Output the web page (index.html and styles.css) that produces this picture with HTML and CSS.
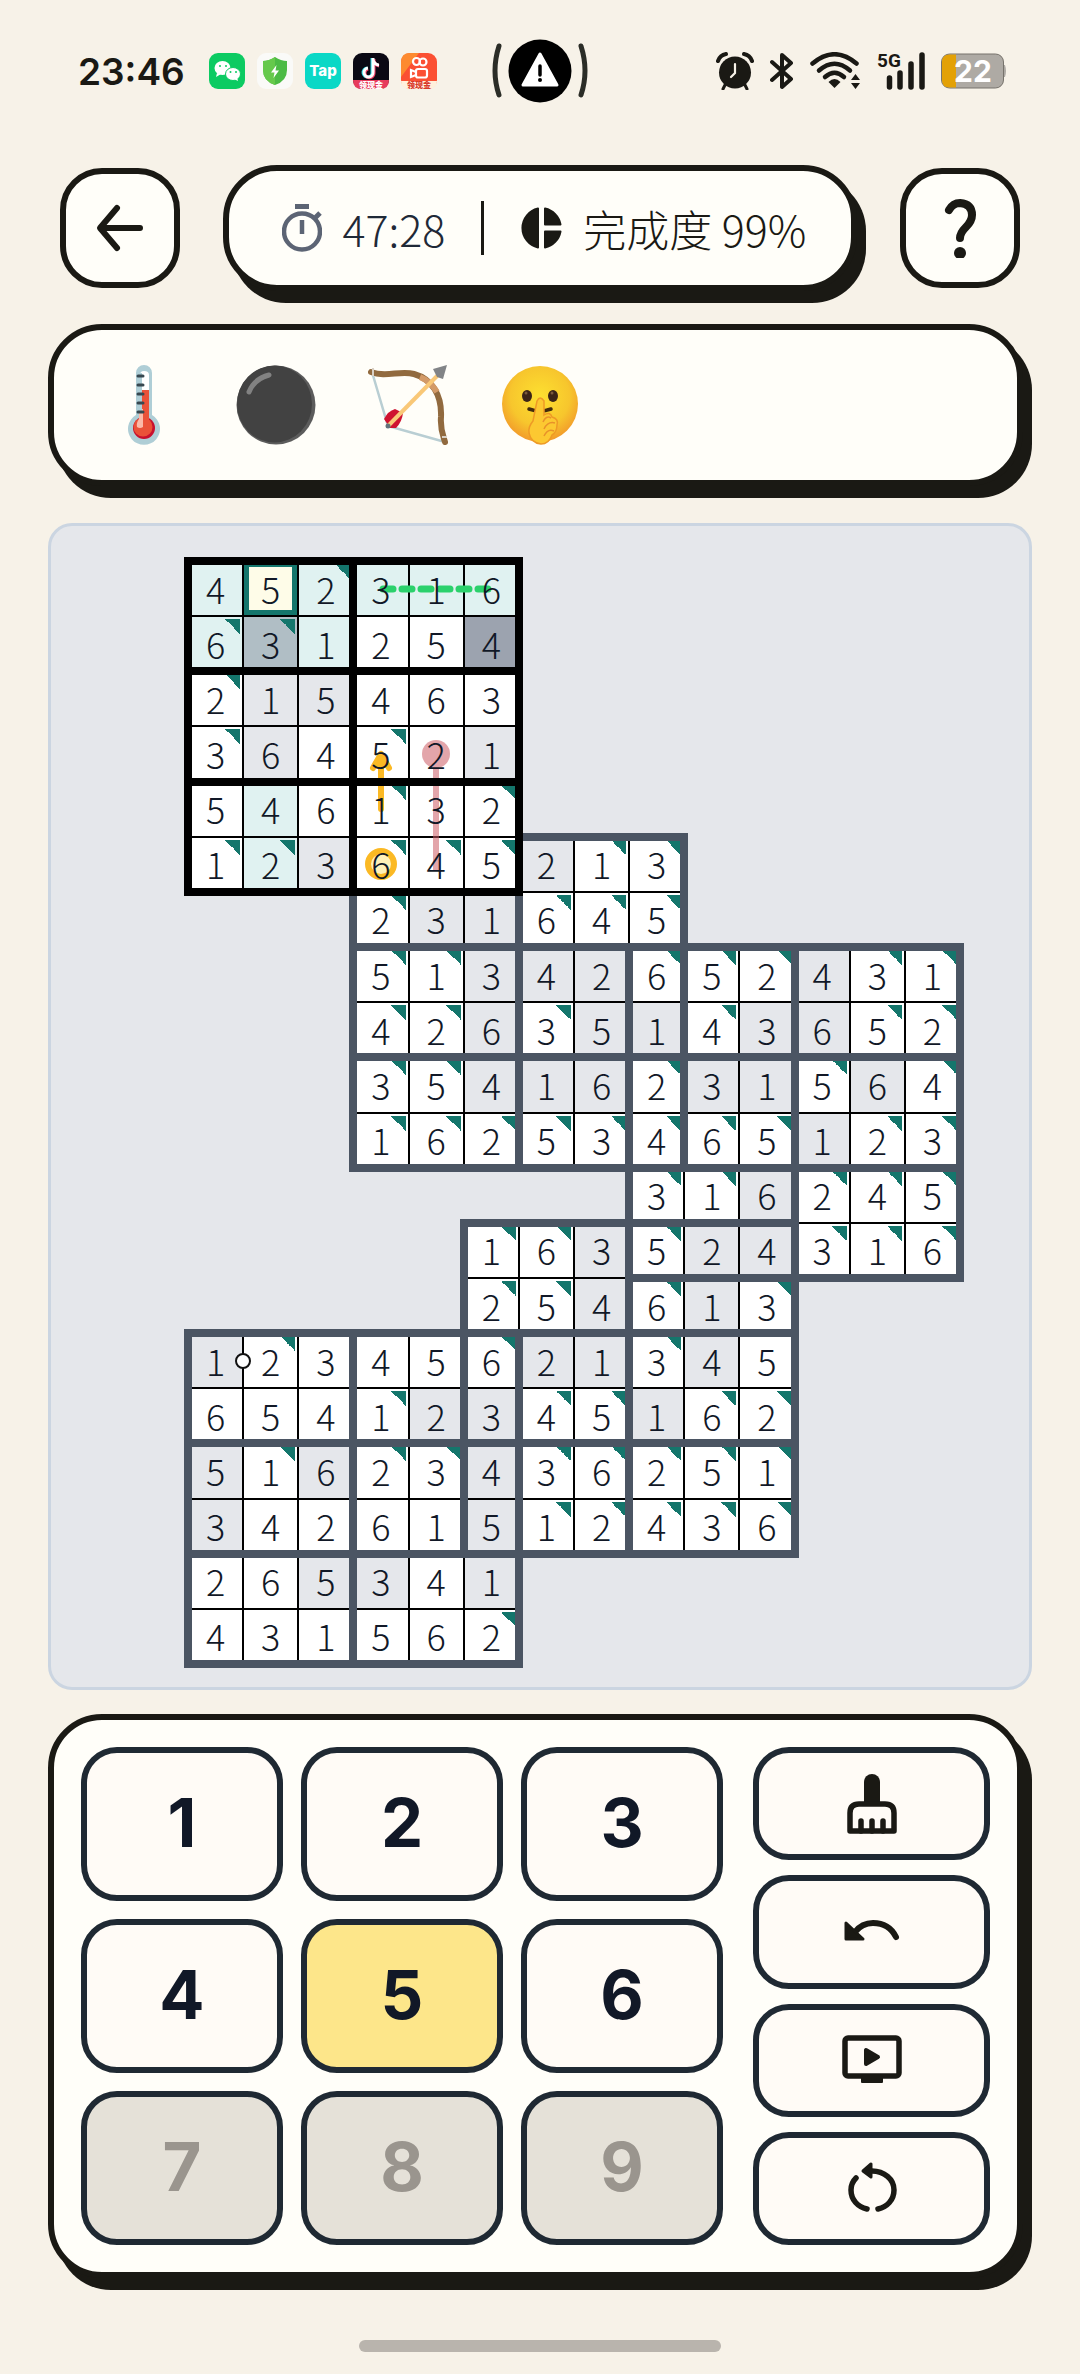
FILE: index.html
```
<!DOCTYPE html>
<html lang="zh-CN">
<head>
<meta charset="UTF-8">
<meta name="viewport" content="width=device-width, initial-scale=1">
<title>数独</title>
<link rel="stylesheet" href="styles.css">
</head>
<body>

<!-- Status bar -->
<div class="status">
    <div class="status-left">
        <span class="clock">23:46</span>
        <div class="apps">
            <svg viewBox="0 0 36 36"><rect width="36" height="36" rx="9" fill="#0ccb62"/><ellipse cx="13.500" cy="15" rx="8" ry="7" fill="#fff"/><path d="M8 20l-1 4 5-3z" fill="#fff"/><ellipse cx="24" cy="21" rx="7.500" ry="6.500" fill="#fff" stroke="#0ccb62"/><path d="M25 26l4 2-1-4z" fill="#fff"/><g fill="#0ccb62"><circle cx="11" cy="13" r="1"/><circle cx="17" cy="13" r="1"/><circle cx="21.500" cy="19" r="1"/><circle cx="27" cy="19" r="1"/></g></svg>
            <svg viewBox="0 0 36 36"><rect width="36" height="36" rx="9" fill="#fafaf8"/><path d="M18 4Q24 8 30 8V17Q30 28 18 32Q6 28 6 17V8Q12 8 18 4Z" fill="#4cbb45"/><path d="M18 4Q12 8 6 8V17Q6 28 18 32Z" fill="#66c94c"/><path d="M19.500 12L14 19.500H17.500L16.500 25L22 17.500H18.500Z" fill="#fff"/></svg>
            <svg viewBox="0 0 36 36"><rect width="36" height="36" rx="9" fill="#0ad8c6"/><text x="18" y="23" class="tap-text">Tap</text></svg>
            <svg viewBox="0 0 36 36"><rect width="36" height="36" rx="9" fill="#0b0914"/><g fill="none" stroke-width="3"><path d="M19 5V19A4.500 4.500 0 1 1 14 15M19 7Q21 12 25 12" stroke="#25d9e4"/><path d="M21 6V20A4.500 4.500 0 1 1 15 16M21 8Q22 12 26 13" stroke="#f4436a"/><path d="M20 5V19A4.500 4.500 0 1 1 15 15M20 7Q22 12 26 12" stroke="#fff"/></g><path d="M0 27H36Q36 36 27 36H9Q0 36 0 27Z" fill="#e73b5c"/><text x="18" y="35" class="ribbon-text">领现金</text></svg>
            <svg viewBox="0 0 36 36"><rect width="36" height="36" rx="9" fill="#fb5033"/><path d="M0 24V9Q0 0 9 0H18Z" fill="#fd8a30"/><g fill="none" stroke="#fff" stroke-width="2.200"><circle cx="15.500" cy="8.500" r="3.500"/><circle cx="22" cy="9" r="3.500"/><rect x="15" y="16" width="11" height="8.500" rx="2"/><path d="M15 19L10 17V24L15 22"/></g><path d="M0 28H36Q36 36 27 36H9Q0 36 0 28Z" fill="#fff0dc"/><text x="18" y="35" class="ribbon-text red">领现金</text></svg>
        </div>
    </div>
    <svg class="island" viewBox="0 0 96 64">
        <path d="M7 7Q-1 32 7 56M89 7Q97 32 89 56" fill="none" stroke="#2b2d27" stroke-width="5" stroke-linecap="round"/>
        <circle cx="48" cy="32" r="31.500" fill="#000"/>
        <path d="M48 15L65 46H31Z" fill="#fff" stroke="#fff" stroke-width="3" stroke-linejoin="round"/>
        <path d="M48 27V36" stroke="#000" stroke-width="3.500" stroke-linecap="round"/><circle cx="48" cy="41" r="2" fill="#000"/>
    </svg>
    <div class="status-right">
        <svg width="38" height="38" viewBox="0 0 38 38"><circle cx="19" cy="20.500" r="16" fill="#1a1914"/><path d="M2 9Q4 3 10 2M36 9Q34 3 28 2" stroke="#1a1914" stroke-width="4" stroke-linecap="round"/><path d="M9 33L7 37M29 33L31 37" stroke="#1a1914" stroke-width="3" stroke-linecap="round"/><path d="M19 12V21L15 25" fill="none" stroke="#f7f2e8" stroke-width="2.200" stroke-linecap="round"/></svg>
        <svg width="24" height="38" viewBox="0 0 24 38"><path d="M2 10L21 27L12 35V3L21 11L2 28" fill="none" stroke="#1a1914" stroke-width="4" stroke-linecap="round" stroke-linejoin="round"/></svg>
        <svg width="51" height="38" viewBox="0 0 51 38"><g fill="none" stroke="#1a1914" stroke-width="4.500" stroke-linecap="round"><path d="M2.500 11.500Q24.500 -7 46.500 11.500"/><path d="M9 18.500Q24.500 5 40 18.500"/><path d="M15 25Q24.500 16.500 34 25"/></g><path d="M24.500 36L18.500 30Q24.500 24 30.500 30Z" fill="#1a1914"/><path d="M41 28L45.500 22L50 28ZM41 31H50L45.500 37Z" fill="#1a1914"/></svg>
        <svg width="48" height="46" viewBox="0 -4 48 46"><text x="0" y="15" class="net-text">5G</text><path d="M12.500 26V35M23 21V35M34 12V35M45 3V35" stroke="#1a1914" stroke-width="5.500" stroke-linecap="round"/></svg>
        <svg width="67" height="36" viewBox="0 0 67 36"><path d="M62 12H64Q66 18 64 24H62Z" fill="#aeaaa4"/><rect x=".5" y="1" width="62" height="34" rx="8" fill="#aeaaa4" stroke="#77736c"/><path d="M15 1.500H8.500Q1 1.500 1 9V27Q1 34.500 8.500 34.500H15Z" fill="#e3a106"/><text x="32" y="29" class="battery-text">22</text></svg>
    </div>
</div>

<!-- Header -->
<header class="header">
    <button class="round-btn" aria-label="返回">
        <svg width="60" height="60" viewBox="0 0 60 60"><path d="M50 30H11M27 10L10 30L27 50" fill="none" stroke="#1a1914" stroke-width="6" stroke-linecap="round" stroke-linejoin="round"/></svg>
    </button>
    <div class="info card">
        <svg width="40" height="48" viewBox="0 0 40 48"><g fill="none" stroke="#5c6474"><circle cx="20" cy="27.500" r="18" stroke-width="4.500"/><path d="M20 16V30" stroke-width="4.500"/><path d="M13 2.500H27" stroke-width="5"/><path d="M32 15L38 9" stroke-width="5"/></g></svg>
        <span class="time">47:28</span>
        <span class="divider"></span>
        <svg width="42" height="42" viewBox="0 0 42 42"><g fill="#1a1914" stroke="#1a1914" stroke-width="2" stroke-linejoin="round"><path d="M18 1.500A20 20 0 0 0 18 40.500Z"/><path d="M25 1.500A20 20 0 0 1 40.500 17.500H25Z"/><path d="M25 24.500H40.500A20 20 0 0 1 25 40.500Z"/></g></svg>
        <span class="percent">完成度 99%</span>
    </div>
    <button class="round-btn" aria-label="帮助">
        <svg width="60" height="60" viewBox="0 0 60 60"><path d="M19 12Q23 5 30 5Q42 6 42 17Q42 23 36 29Q30 35 30 40" fill="none" stroke="#1a1914" stroke-width="8" stroke-linecap="round"/><circle cx="30" cy="55" r="6" fill="#1a1914"/></svg>
    </button>
</header>

<main class="main">
    <!-- Rules in play -->
    <div class="rules card">
        <svg viewBox="0 0 80 80">
            <path d="M32 8A8 8 0 0 1 48 8V50A16 16 0 1 1 32 50Z" fill="#afced6"/>
            <path d="M36 10Q36 6 40 6Q45 6 45 10V27H36Z" fill="#fff"/>
            <circle cx="40" cy="63" r="11" fill="#c8102e"/><circle cx="39" cy="62" r="9.500" fill="#ea5138"/>
            <path d="M35 25H45V58H35Z" fill="#ea5138"/><path d="M35 44H39V62Q36 64 33 62Q32 58 35 54Z" fill="#fbb9a8"/><path d="M34 8H38V47H34Z" fill="#afced6"/>
            <path d="M34 11H39M34 20H39M34 29H39M34 38H39M34 47H39" stroke="#37474f" stroke-width="3" stroke-linecap="round"/>
        </svg>
        <svg viewBox="0 0 80 80">
            <circle cx="40" cy="40" r="39.500" fill="#5c5c5c"/><ellipse cx="38.500" cy="39" rx="37.500" ry="38.500" fill="#424242"/>
            <path d="M33 10Q18 14 13 27" fill="none" stroke="#828282" stroke-width="5" stroke-linecap="round"/>
        </svg>
        <svg viewBox="0 0 80 80">
            <path d="M4 7L20 61L77 77" fill="none" stroke="#b9ced3" stroke-width="2.500"/>
            <path d="M3 7C18 13 32 5 46 9C64 14 74 30 73 52C72 64 75 70 77 77" fill="none" stroke="#916a3f" stroke-width="6" stroke-linecap="round"/>
            <path d="M52 12Q62 16 69 27" fill="none" stroke="#d39a68" stroke-width="6"/>
            <path d="M16 54Q20 46 27 44L35 48Q34 57 28 63L22 63Z" fill="#cf1230"/>
            <path d="M20 61L70 10" stroke="#f9c878" stroke-width="4"/>
            <path d="M79 0L75 14L69 12L65 4Z" fill="#828487"/><circle cx="20" cy="61" r="2.500" fill="#62727b"/>
            <path d="M5 3V11M74 72H79" stroke="#d9d0c5" stroke-width="2"/>
        </svg>
        <svg viewBox="0 0 80 80">
            <defs><radialGradient id="face" cx=".5" cy=".4" r=".6"><stop offset="0" stop-color="#fde030"/><stop offset=".65" stop-color="#f7c62d"/><stop offset="1" stop-color="#f29a2a"/></radialGradient></defs>
            <circle cx="40" cy="39" r="38" fill="url(#face)"/>
            <ellipse cx="27" cy="31" rx="5" ry="6" fill="#3b2417"/><ellipse cx="53" cy="31" rx="5" ry="6" fill="#3b2417"/>
            <circle cx="26" cy="28" r="1.500" fill="#7b5a3c"/><circle cx="52" cy="28" r="1.500" fill="#7b5a3c"/>
            <path d="M29 44Q40 48 51 44" fill="none" stroke="#422b0d" stroke-width="3.500" stroke-linecap="round"/>
            <path d="M37 36Q40 30 44 36L44 50Q50 46 52 52Q59 54 57 60Q57 67 52 70Q49 79 41 79Q31 78 29 68Q28 62 33 56Z" fill="#fcc831" stroke="#ee9a26" stroke-width="1.500"/>
            <path d="M43 57Q46 50 51 53M44 64Q48 56 55 58M44 71Q48 63 54 66" fill="none" stroke="#e8912a" stroke-width="1.500"/>
        </svg>
    </div>

    <!-- Board, filled in by script.js -->
    <div class="board-panel">
        <div class="board" id="board">
            <svg class="clues" viewBox="0 0 772 1103">
                <path d="M195 28H304" fill="none" stroke="#2bd16c" stroke-width="7" stroke-linecap="round" stroke-dasharray="10 9"/>
                <g opacity=".55"><path d="M248 193V309" stroke="#cd5c66" stroke-width="6"/><circle cx="248" cy="193" r="14" fill="#cd5c66"/></g>
                <g fill="none" stroke="#fbb924" stroke-width="6" stroke-linecap="round" stroke-linejoin="round"><path d="M193 248V195"/><path d="M193 193L185 207M193 193L201 207" /><path d="M193 195L187 204H199Z" fill="#fbb924"/><circle cx="193" cy="303" r="13" fill="#fff0b8"/></g>
                <circle cx="55" cy="800" r="7" fill="#fff" stroke="#111" stroke-width="2"/>
            </svg>
        </div>
    </div>

    <!-- Keypad -->
    <div class="keypad card">
        <div class="numbers">
            <button>1</button>
            <button>2</button>
            <button>3</button>
            <button>4</button>
            <button class="active">5</button>
            <button>6</button>
            <button disabled>7</button>
            <button disabled>8</button>
            <button disabled>9</button>
        </div>
        <div class="tools">
            <button aria-label="清除">
                <svg width="60" height="62" viewBox="0 0 60 62"><path d="M22 32V9A8 8 0 0 1 38 9V32Z" fill="#1a1914"/><path d="M8 58V40Q8 31 17 31H43Q52 31 52 40V58Z" fill="none" stroke="#1a1914" stroke-width="5.500" stroke-linejoin="round"/><path d="M19 58V48M30 58V48M41 58V48" stroke="#1a1914" stroke-width="5.500" stroke-linecap="round"/></svg>
            </button>
            <button aria-label="撤销">
                <svg width="60" height="40" viewBox="0 0 60 40"><path d="M13 20Q20 11 31 11Q47 11 54 25" fill="none" stroke="#1a1914" stroke-width="6" stroke-linecap="round"/><path d="M4 11V27H21Z" fill="#1a1914" stroke="#1a1914" stroke-width="3" stroke-linejoin="round"/></svg>
            </button>
            <button aria-label="观看视频">
                <svg width="60" height="52" viewBox="0 0 60 52"><rect x="3" y="4" width="54" height="38" rx="3" fill="none" stroke="#1a1914" stroke-width="5.500"/><path d="M20 43H40V48H20Z" fill="#1a1914" stroke="#1a1914" stroke-width="2" stroke-linejoin="round"/><path d="M24 16V30L36 23Z" fill="#1a1914" stroke="#1a1914" stroke-width="4" stroke-linejoin="round"/></svg>
            </button>
            <button aria-label="重新开始">
                <svg width="60" height="54" viewBox="0 0 60 54"><path d="M30 10C42 10 52 18 52 29C52 39 45 46 36 48M25 48C16 46 9 39 9 29Q9 22 14 17" fill="none" stroke="#1a1914" stroke-width="5.500" stroke-linecap="round"/><path d="M29 3V16L21 10Z" fill="#1a1914" stroke="#1a1914" stroke-width="3" stroke-linejoin="round"/></svg>
            </button>
        </div>
    </div>
</main>

<div class="home-bar"></div>

<script src="script.js"></script>
</body>
</html>
```
FILE: styles.css
```
* {
    box-sizing: border-box;
}

body {
    margin: 0;
    background-color: #f7f2e8;
    color: #1a1914;
    font-family: "Noto Sans CJK SC", "Noto Sans", sans-serif;
}

svg {
    display: block;
    flex-shrink: 0;
}

button {
    display: flex;
    align-items: center;
    justify-content: center;
    padding: 0;
    cursor: pointer;
}

.card {
    background-color: #fffef9;
    border: 6px solid #1a1914;
    box-shadow: 9px 12px 0 #1a1914;
}

/* Status bar */
.status {
    display: grid;
    grid-template-columns: 1fr 96px 1fr;
    align-items: center;
    height: 142px;
    padding: 0 72px;
}

.status-left,
.status-right,
.apps {
    display: flex;
    align-items: center;
}

.status-left {
    gap: 24px;
    padding-left: 6px;
}

.status-right {
    justify-content: flex-end;
    gap: 16px;
}

.clock {
    font-family: Inter, sans-serif;
    font-size: 37px;
    font-weight: 600;
}

.apps {
    gap: 12px;
}

.apps svg {
    width: 36px;
    height: 36px;
}

.tap-text,
.ribbon-text {
    fill: #fff;
    text-anchor: middle;
    font-size: 15px;
    font-weight: 800;
    font-family: Inter, sans-serif;
}

.ribbon-text {
    font-family: "Noto Sans CJK SC", sans-serif;
    font-size: 8px;
}

.ribbon-text.red {
    fill: #d8392c;
}

.net-text {
    fill: #1a1914;
    font: 700 19px Roboto, sans-serif;
}

.battery-text {
    fill: #fff;
    text-anchor: middle;
    font: 700 30px Inter, sans-serif;
}

/* Header */
.header {
    display: flex;
    align-items: center;
    gap: 43px;
    padding: 23px 60px 0;
}

.round-btn {
    width: 120px;
    height: 120px;
    flex-shrink: 0;
    background-color: #fffef9;
    border: 6px solid #1a1914;
    border-radius: 42px;
}

.info {
    flex: 1;
    display: flex;
    align-items: center;
    justify-content: center;
    gap: 21px;
    height: 126px;
    padding-left: 8px;
    border-radius: 54px;
    font-size: 43px;
    font-weight: 300;
    white-space: nowrap;
}

.time {
    color: #1f2937;
}

.divider {
    width: 3px;
    height: 54px;
    margin: 0 15px;
    background-color: #1a1914;
}

/* Content */
.main {
    display: flex;
    flex-direction: column;
    padding: 33px 48px 0;
}

.rules {
    display: flex;
    align-items: center;
    gap: 52px;
    height: 162px;
    margin-right: 9px;
    padding: 0 50px;
    border-radius: 54px;
}

.rules svg {
    width: 80px;
    height: 80px;
}

.board-panel {
    margin-top: 37px;
    padding: 35px 66px 23px 137px;
    border: 3px solid #cbd5e1;
    border-radius: 24px;
    background-color: #e5e7eb;
}

.board {
    position: relative;
    display: grid;
    grid-template-columns: repeat(14, 1fr);
    grid-template-rows: repeat(20, 1fr);
    max-width: 772px;
    aspect-ratio: 772 / 1103;
}

.cell {
    display: flex;
    align-items: center;
    justify-content: center;
    min-height: 0;
    padding-bottom: 2px;
    border: 1px solid #000;
    background-color: #fff;
    color: #111827;
    font-size: 36px;
    font-weight: 300;
    line-height: 1;
}

.cell span {
    position: relative;
    z-index: 3;
}

.cell.given {
    background-color: #e5e7eb;
}

.cell.hint {
    background-color: #e0f2f1;
}

.cell.same {
    background-color: #b0bec5;
}

.cell.dark {
    background-color: #9ca3af;
}

.cell.selected {
    background-color: #fefce8;
    box-shadow: inset 0 0 0 5px #14766c;
}

/* teal corner of a cell filled in by the player */
.cell.mark {
    background-image: linear-gradient(to top right, transparent 50%, #14766c 50%);
    background-size: 15px 15px;
    background-position: right 2px top 2px;
    background-repeat: no-repeat;
}

.block {
    z-index: 2;
    margin: -4px;
    border: 8px solid #4b5563;
}

/* the current grid covers the top edge of the block it shares */
.block.covered {
    border-top-width: 0;
}

.block.current {
    border-color: #000;
}

.clues {
    position: absolute;
    z-index: 1;
    width: 100%;
    height: 100%;
}

/* Keypad */
.keypad {
    display: grid;
    grid-template-columns: 1fr 237px;
    gap: 30px;
    margin: 24px 9px 0 0;
    padding: 27px;
    border-radius: 54px;
}

.numbers {
    display: grid;
    grid-template-columns: repeat(3, 1fr);
    grid-auto-rows: 154px;
    gap: 18px;
}

.tools {
    display: grid;
    grid-template-rows: repeat(4, 1fr);
    gap: 15px;
}

.keypad button {
    border: 6px solid #1f2933;
    border-radius: 36px;
    background-color: #fffbf6;
    color: #111827;
    font-family: Inter, sans-serif;
    font-size: 67px;
    font-weight: 700;
    line-height: 1;
}

.numbers button {
    padding-bottom: 4px;
}

.keypad .active {
    background-color: #fde68a;
}

.keypad button:disabled {
    background-color: #e5e1d8;
    color: #9a958e;
}

.home-bar {
    width: 362px;
    height: 12px;
    margin: 62px auto 22px;
    border-radius: 6px;
    background-color: #b9b4ad;
}
```
FILE: script.js
```
// each row: first column, digits, cell states
// g given, m mark, h hint, H hint + mark, K same + mark, d dark, s selected
const rows = [
    [0, "452316", "hsHhhh"],
    [0, "631254", "HKh..d"],
    [0, "215463", "mgg..."],
    [0, "364521", "mg.m.g"],
    [0, "546132", ".h.m.m"],
    [0, "123645213", "mHgmmmgmm"],
    [3, "231645", "mggmmm"],
    [3, "51342652431", "mmgggmmmgmm"],
    [3, "42635143652", "mmgmggmggmm"],
    [3, "35416231564", "mmgggmggmgm"],
    [3, "16253465123", "mmmmmmmmgmm"],
    [8, "316245", "mmgmmm"],
    [5, "163524316", "mmgmggmmm"],
    [5, "254613", "mmgmgm"],
    [0, "12345621345", "gm...mggmg."],
    [0, "65412345162", "...mggmmgmm"],
    [0, "51623436251", "gmgmmgmmmmm"],
    [0, "34261512436", "g....gmmmmm"],
    [0, "265341", "..gg.g"],
    [0, "431562", ".....m"]
];

const classes = {
    g: "given", m: "mark", h: "hint", H: "hint mark",
    K: "same mark", d: "dark", s: "selected", ".": ""
};

// top left corner of each 6x6 grid, the current one last so it is on top
const grids = [[3, 5], [8, 7], [5, 12], [0, 14], [0, 0]];

const board = document.getElementById("board");

rows.forEach(([start, digits, states], r) => {
    [...digits].forEach((digit, i) => {
        const cell = document.createElement("div");
        cell.className = "cell " + classes[states[i]];
        cell.style.gridArea = `${r + 1} / ${start + i + 1}`;
        const span = document.createElement("span");
        span.textContent = digit;
        cell.append(span);
        board.append(cell);
    });
});

grids.forEach(([x, y]) => {
    for (let n = 0; n < 6; n++) {
        const block = document.createElement("div");
        const row = y + Math.floor(n / 2) * 2 + 1;
        const col = x + (n % 2) * 3 + 1;
        block.className = "block";
        if (x + y === 0) block.classList.add("current");
        if (row === 6 && col === 4) block.classList.add("covered");
        block.style.gridArea = `${row} / ${col} / span 2 / span 3`;
        board.append(block);
    }
});
```
